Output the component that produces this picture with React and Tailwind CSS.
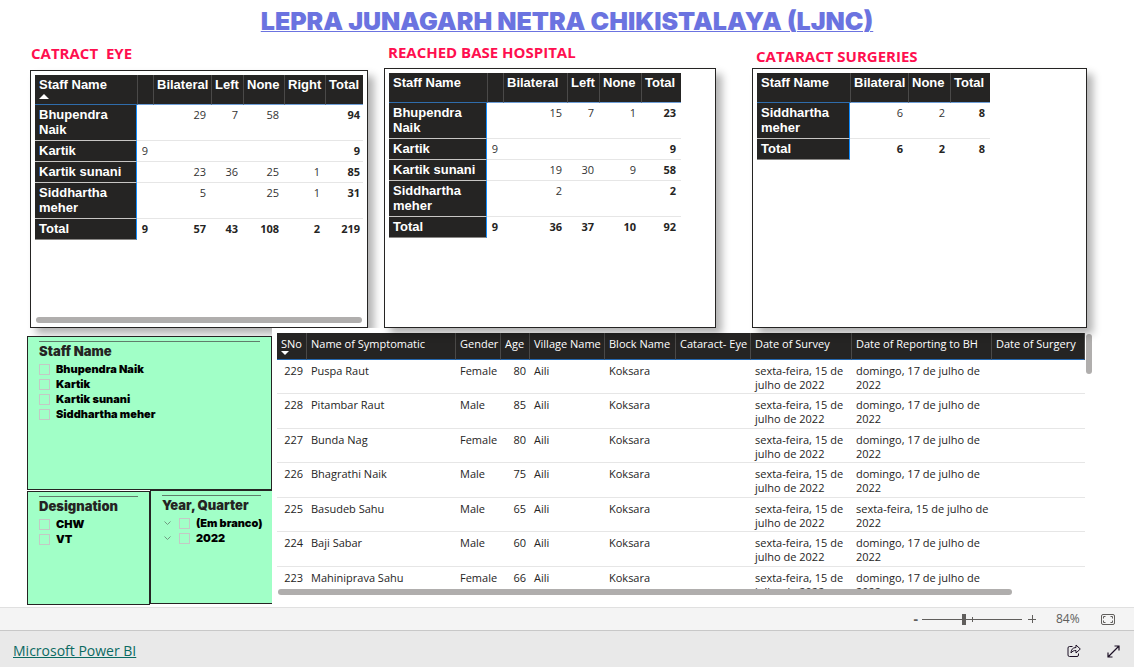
import React, { useState } from 'react';

const NAMES_ALL = ['Bhupendra Naik', 'Kartik', 'Kartik sunani', 'Siddhartha meher'];

const cataractEye = {
    columns: ['', 'Bilateral', 'Left', 'None', 'Right', 'Total'],
    widths: [102, 16, 58, 32, 41, 41, 40],
    rows: [
        { name: 'Bhupendra Naik', values: ['', 29, 7, 58, '', 94] },
        { name: 'Kartik', values: [9, '', '', '', '', 9] },
        { name: 'Kartik sunani', values: ['', 23, 36, 25, 1, 85] },
        { name: 'Siddhartha meher', values: ['', 5, '', 25, 1, 31] },
    ],
    total: [9, 57, 43, 108, 2, 219],
};

const reachedHospital = {
    columns: ['', 'Bilateral', 'Left', 'None', 'Total'],
    widths: [98, 16, 64, 32, 42, 40],
    rows: [
        { name: 'Bhupendra Naik', values: ['', 15, 7, 1, 23] },
        { name: 'Kartik', values: [9, '', '', '', 9] },
        { name: 'Kartik sunani', values: ['', 19, 30, 9, 58] },
        { name: 'Siddhartha meher', values: ['', 2, '', '', 2] },
    ],
    total: [9, 36, 37, 10, 92],
};

const surgeries = {
    columns: ['Bilateral', 'None', 'Total'],
    widths: [93, 58, 42, 40],
    rows: [{ name: 'Siddhartha meher', values: [6, 2, 8] }],
    total: [6, 2, 8],
};

const SURVEY_DATE = 'sexta-feira, 15 de julho de 2022';
const REPORT_DATE = 'domingo, 17 de julho de 2022';

const patients = [
    { sno: 229, name: 'Puspa Raut', gender: 'Female', age: 80, reporting: REPORT_DATE },
    { sno: 228, name: 'Pitambar Raut', gender: 'Male', age: 85, reporting: REPORT_DATE },
    { sno: 227, name: 'Bunda Nag', gender: 'Female', age: 80, reporting: REPORT_DATE },
    { sno: 226, name: 'Bhagrathi Naik', gender: 'Male', age: 75, reporting: REPORT_DATE },
    { sno: 225, name: 'Basudeb Sahu', gender: 'Male', age: 65, reporting: SURVEY_DATE },
    { sno: 224, name: 'Baji Sabar', gender: 'Male', age: 60, reporting: REPORT_DATE },
    { sno: 223, name: 'Mahiniprava Sahu', gender: 'Female', age: 66, reporting: REPORT_DATE },
];

const patientColumns = [
    { label: 'SNo', width: 30 },
    { label: 'Name of Symptomatic', width: 149 },
    { label: 'Gender', width: 45 },
    { label: 'Age', width: 29 },
    { label: 'Village Name', width: 75 },
    { label: 'Block Name', width: 71 },
    { label: 'Cataract- Eye', width: 75 },
    { label: 'Date of Survey', width: 101 },
    { label: 'Date of Reporting to BH', width: 140 },
    { label: 'Date of Surgery', width: 93 },
];

const MatrixTable = ({ data, sorted }) => {
    const tableWidth = data.widths.reduce((a, b) => a + b, 0);
    const last = data.columns.length - 1;

    return (
        <div className="overflow-hidden">
            <table className="table-fixed border-separate border-spacing-0" style={{ width: tableWidth }}>
                <colgroup>
                    {data.widths.map((w, i) => <col key={i} style={{ width: w }} />)}
                </colgroup>
                <thead>
                    <tr className="h-[30px] bg-[#252423] text-left align-top font-['Liberation_Sans',sans-serif] text-[13px] leading-[15px] text-white">
                        <th className="border-b border-[#2f6cab] pl-1 pt-[2px] font-bold">
                            Staff Name
                            {sorted && (
                                <svg className="mt-[2px] block" width="10" height="5" viewBox="0 0 10 5"><path d="M0 5 5 0l5 5z" fill="#fff" /></svg>
                            )}
                        </th>
                        {data.columns.map((c, i) => (
                            <th key={i} className="border-b border-l border-b-[#6f9fd8] border-l-[#4a4948] pl-[3px] pt-[2px] font-bold whitespace-nowrap">{c}</th>
                        ))}
                    </tr>
                </thead>
                <tbody>
                    {data.rows.map((row) => (
                        <tr key={row.name} className="align-top">
                            <th scope="row" className="border-b border-r border-b-[#c8c6c4] border-r-[#118dff] bg-[#252423] pt-[2px] pb-[3px] pl-1 text-left font-['Liberation_Sans',sans-serif] text-[13px] leading-[15px] font-bold text-white">{row.name}</th>
                            {row.values.map((v, i) => (
                                <td key={i} className={`border-b border-[#e6e6e6] pt-[2px] pr-[5px] text-right text-[11px] leading-[15px] ${i === last ? 'font-bold text-[#252423]' : 'text-[#333]'}`}>{v}</td>
                            ))}
                        </tr>
                    ))}
                    <tr className="align-top">
                        <th scope="row" className="border-b border-r border-b-[#8a8886] border-r-[#118dff] bg-[#252423] pt-[2px] pb-[3px] pl-1 text-left font-['Liberation_Sans',sans-serif] text-[13px] leading-[15px] font-bold text-white">Total</th>
                        {data.total.map((v, i) => (
                            <td key={i} className="pt-[2px] pr-[5px] text-right text-[11px] leading-[15px] font-bold text-[#252423]">{v}</td>
                        ))}
                    </tr>
                </tbody>
            </table>
        </div>
    );
};

const Slicer = ({ title, items, expandable, className }) => (
    <fieldset className={`min-w-0 border-[#252423] bg-[#a1ffc7] px-[11px] pt-1 ${className}`}>
        <div className="border-t border-[#5f7d6b]">
            <h3 className="text-[13px] leading-[18px] font-black whitespace-nowrap text-[#252423] font-['Arial_Black',Inter,sans-serif]">{title}</h3>
        </div>
        <ul className="mt-[2px]">
            {items.map(item => (
                <li key={item} className="flex h-[15px] items-center">
                    {expandable && (
                        <button aria-label={`Expand ${item}`} className="mr-2 pl-[2px]">
                            <svg width="7" height="5" viewBox="0 0 7 5" fill="none" stroke="#6f9a80"><path d="m.5.5 3 3 3-3" /></svg>
                        </button>
                    )}
                    <label className="flex items-center gap-[6px] whitespace-nowrap text-[11px] leading-[15px] font-black text-black font-['Arial_Black',Inter,sans-serif]">
                        <input type="checkbox" className="size-[11px] shrink-0 appearance-none border border-[#c3c9c5] checked:bg-[#252423]" />
                        {item}
                    </label>
                </li>
            ))}
        </ul>
    </fieldset>
);

const PatientTable = () => (
    <table className="w-full table-fixed border-separate border-spacing-0 text-[11px] leading-[14px] text-[#252423]">
        <colgroup>
            {patientColumns.map(c => <col key={c.label} style={{ width: c.width }} />)}
        </colgroup>
        <thead>
            <tr className="h-[27px] bg-[#252423] text-left align-top text-white">
                {patientColumns.map((c, i) => (
                    <th key={c.label} className="border-r border-b border-r-[#4a4948] border-b-[#2468b0] pl-1 pt-1 font-normal whitespace-nowrap">
                        {c.label}
                        {i === 0 && (
                            <svg className="block" width="8" height="4" viewBox="0 0 8 4"><path d="M0 0h8L4 4z" fill="#fff" /></svg>
                        )}
                    </th>
                ))}
            </tr>
        </thead>
        <tbody className="[&_td]:border-b [&_td]:border-[#e6e6e6] [&_td]:pt-1 [&_td]:pl-1">
            {patients.map(p => (
                <tr key={p.sno} className="align-top odd:h-[34px] even:h-[35px]">
                    <td className="pr-1 text-right">{p.sno}</td>
                    <td>{p.name}</td>
                    <td>{p.gender}</td>
                    <td className="pr-1 text-right">{p.age}</td>
                    <td>Aili</td>
                    <td>Koksara</td>
                    <td />
                    <td>{SURVEY_DATE}</td>
                    <td>{p.reporting}</td>
                    <td />
                </tr>
            ))}
        </tbody>
    </table>
);

const ZoomBar = () => {
    const [zoom, setZoom] = useState(42);

    return (
        <div className="flex h-[23px] items-center justify-end border-t border-[#e0e0e0] bg-[#f4f4f4] pr-[19px] text-[#605e5c]">
            <button aria-label="Zoom out" className="mr-[4px] text-sm leading-4 font-bold">-</button>
            <div className="relative flex items-center">
                <input
                    type="range"
                    aria-label="Zoom"
                    value={zoom}
                    onChange={(e) => setZoom(Number(e.target.value))}
                    className="h-3 w-[100px] appearance-none bg-transparent [&::-webkit-slider-runnable-track]:h-px [&::-webkit-slider-runnable-track]:bg-[#605e5c] [&::-webkit-slider-thumb]:mt-[-5px] [&::-webkit-slider-thumb]:h-[11px] [&::-webkit-slider-thumb]:w-1 [&::-webkit-slider-thumb]:appearance-none [&::-webkit-slider-thumb]:bg-[#605e5c]"
                />
                <span className="absolute top-1 left-1/2 h-[5px] w-px bg-[#605e5c]" />
            </div>
            <button aria-label="Zoom in" className="ml-[6px]">
                <svg width="8" height="8" viewBox="0 0 8 8" stroke="currentColor"><path d="M0 4.5h8M4.5 0v8" /></svg>
            </button>
            <span className="ml-5 w-6 text-xs leading-4">84%</span>
            <button aria-label="Fit to page" className="ml-[21px]">
                <svg width="14" height="11" viewBox="0 0 14 11" fill="none" stroke="currentColor">
                    <rect x=".5" y=".5" width="13" height="10" rx="1.5" />
                    <path d="M2.500 4.500v-2h2M9.500 2.500h2v2M11.500 6.500v2h-2M4.500 8.500h-2v-2" />
                </svg>
            </button>
        </div>
    );
};

const Heading = ({ children, className }) => (
    <h2 className={`flex items-center text-[15px] leading-5 font-bold whitespace-pre text-[#ff0f4f] ${className}`}>{children}</h2>
);

const PANEL = 'flex flex-1 flex-col overflow-hidden border border-[#252423] bg-white p-1 shadow-[6px_6px_8px_rgba(0,0,0,0.3)]';

export default function App() {
    return (
        <div className="flex min-h-screen flex-col bg-white font-['Segoe_UI','Open_Sans',sans-serif]">
            <main className="flex flex-1 flex-col">
                <h1 className="h-10 pt-[6px] text-center text-[25px] leading-[30px] font-black text-[#6b73e0] underline decoration-1 font-['Arial_Black',Inter,sans-serif]">
                    LEPRA JUNAGARH NETRA CHIKISTALAYA (LJNC)
                </h1>

                <div className="flex min-h-[288px] pr-[47px] pl-[30px]">
                    <section className="mr-4 flex min-w-0 flex-[338] flex-col">
                        <Heading className="h-[30px] pb-1 pl-px">{'CATRACT  EYE'}</Heading>
                        <div className={PANEL}>
                            <MatrixTable data={cataractEye} sorted />
                            <div className="mx-px mt-auto h-[6px] rounded-full bg-[#b0aead]" />
                        </div>
                    </section>
                    <section className="relative z-10 mr-9 flex min-w-0 flex-[332] flex-col">
                        <Heading className="h-7 pb-1 pl-1">REACHED BASE HOSPITAL</Heading>
                        <div className={PANEL}>
                            <MatrixTable data={reachedHospital} />
                        </div>
                    </section>
                    <section className="relative z-10 flex min-w-0 flex-[335] flex-col">
                        <Heading className="h-7 pt-1 pl-1">CATARACT SURGERIES</Heading>
                        <div className={PANEL}>
                            <MatrixTable data={surgeries} />
                        </div>
                    </section>
                </div>

                <div className="flex flex-1 pr-[42px] pl-[27px]">
                    <aside className="flex min-w-0 flex-[245] flex-col pt-2 pb-[2px]">
                        <Slicer title="Staff Name" items={NAMES_ALL} className="h-[154px] border" />
                        <div className="flex flex-1">
                            <Slicer title="Designation" items={['CHW', 'VT']} className="mt-px flex-1 border" />
                            <Slicer title="Year, Quarter" items={['(Em branco)', '2022']} expandable className="mb-px flex-1 border-y border-l" />
                        </div>
                    </aside>
                    <section className="min-w-0 flex-[815] bg-white pt-[5px] pl-[5px]">
                        <div className="flex gap-px">
                            <div className="h-[256px] min-w-0 flex-1 overflow-hidden">
                                <PatientTable />
                            </div>
                            <div className="mt-px h-10 w-[6px] rounded-full bg-[#b0aead]" />
                        </div>
                        <div className="ml-px h-[6px] w-9/10 rounded-full bg-[#b0aead]" />
                    </section>
                </div>
            </main>

            <ZoomBar />
            <footer className="flex h-[37px] items-center justify-between border-t border-[#c8c8c8] bg-[#e9e9e9] pt-1 pr-[14px] pl-[13px]">
                <a href="#powerbi" className="text-[14px] leading-5 text-[#0b6a62] underline">Microsoft Power BI</a>
                <div className="flex items-center gap-[26px] text-[#1b0f24]">
                    <button aria-label="Share">
                        <svg width="14" height="14" viewBox="0 0 14 14" fill="none" stroke="currentColor" strokeLinejoin="round">
                            <path d="M5.500 2.500h-3a1.500 1.500 0 0 0-1.500 1.500v7a1.500 1.500 0 0 0 1.500 1.500h7.500a1.500 1.500 0 0 0 1.500-1.500V9.500" />
                            <path d="M9 1v2.500C5.500 3.500 4 6 4 9c1.200-1.800 2.700-2.500 5-2.500V9l4.300-4z" />
                        </svg>
                    </button>
                    <button aria-label="Full screen">
                        <svg width="13" height="13" viewBox="0 0 13 13" fill="none" stroke="currentColor" strokeWidth="1.2">
                            <path d="M1 12 12 1M7.500 1H12v4.500M5.500 12H1V7.500" />
                        </svg>
                    </button>
                </div>
            </footer>
        </div>
    );
}
